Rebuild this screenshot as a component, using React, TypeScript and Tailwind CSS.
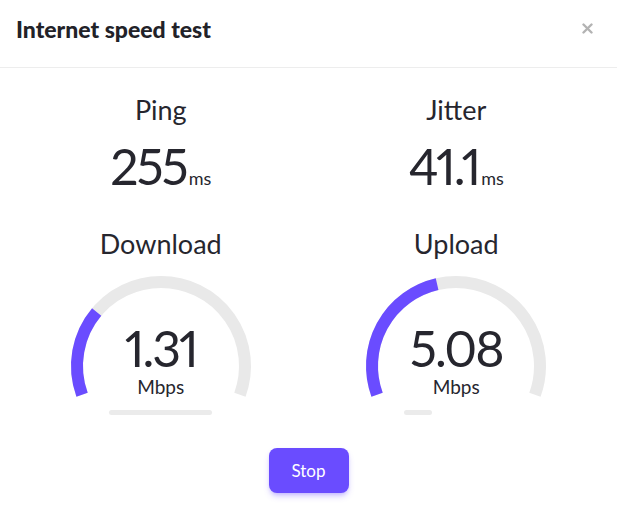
const PURPLE = '#6a4cff';
const TRACK = '#e9e9e9';

// angle in degrees, measured counter-clockwise from +x (y axis up)
function pt(cx: number, cy: number, r: number, deg: number) {
  const a = (deg * Math.PI) / 180;
  return [cx + r * Math.cos(a), cy - r * Math.sin(a)];
}

function arc(from: number, to: number) {
  const [x1, y1] = pt(94, 94, 84, from);
  const [x2, y2] = pt(94, 94, 84, to);
  const large = from - to > 180 ? 1 : 0;
  return `M ${x1} ${y1} A 84 84 0 ${large} 1 ${x2} ${y2}`;
}

function Stat({ label, value }: { label: string; value: string }) {
  return (
    <div className="flex flex-col items-center">
      <div className="text-[27px] leading-[32px]">{label}</div>
      <div className="mt-[12px] flex items-baseline">
        <span className="text-[50px] leading-[56px] tracking-[-2px] proportional-nums">{value}</span>
        <span className="ml-[2px] text-[18px] leading-[24px]">ms</span>
      </div>
    </div>
  );
}

function Gauge({ label, value, fillTo, bar }: { label: string; value: string; fillTo: number; bar: number }) {
  return (
    <div className="mt-[34px] flex flex-col items-center">
      <div className="text-[27px] leading-[32px]">{label}</div>
      <div className="relative mt-[12px] h-[132px] w-[188px]">
        <svg className="absolute inset-0" width="188" height="132" viewBox="0 0 188 132">
          <path d={arc(200, -20)} fill="none" stroke={TRACK} strokeWidth="12" />
          <path d={arc(200, fillTo)} fill="none" stroke={PURPLE} strokeWidth="12" />
        </svg>
        <div className="relative flex flex-col items-center pt-[48px]">
          <span className="text-[50px] leading-[56px] tracking-[-2px] proportional-nums">{value}</span>
          <span className="text-[19px] leading-[22px]">Mbps</span>
        </div>
      </div>
      <div className="mt-[6px] w-[104px]">
        <div className="h-[5px] rounded-full bg-[#ebebeb]" style={{ width: bar }} />
      </div>
    </div>
  );
}

export default function App() {
  return (
    <div className="h-[509px] w-[617px] bg-white text-[#26262e]" style={{ fontFamily: 'Lato, "Open Sans", sans-serif' }}>
      <div className="flex h-[68px] items-start justify-between border-b border-[#ededed] px-4 pt-[15px]">
        <h1 className="text-[23px] font-black leading-[28px] text-[#222228]">Internet speed test</h1>
        <button className="-mt-[1px] flex h-[28px] w-[28px] items-center justify-center">
          <svg width="11" height="11" viewBox="0 0 11 11">
            <path d="M1.5 1.5 L9.5 9.5 M9.5 1.5 L1.5 9.5" stroke="#b3b3b3" strokeWidth="2.4" strokeLinecap="round" />
          </svg>
        </button>
      </div>

      <div className="grid grid-cols-2 px-[13px] pt-[26px]">
        <Stat label="Ping" value="255" />
        <Stat label="Jitter" value="41.1" />
        <Gauge label="Download" value="1.31" fillTo={140} bar={103} />
        <Gauge label="Upload" value="5.08" fillTo={103} bar={28} />
      </div>

      <div className="mt-[33px] flex justify-center">
        <button className="h-[45px] w-[80px] rounded-lg bg-[#6a4cff] text-[17px] text-white shadow-md shadow-[#6a4cff]/30">
          Stop
        </button>
      </div>
    </div>
  );
}
